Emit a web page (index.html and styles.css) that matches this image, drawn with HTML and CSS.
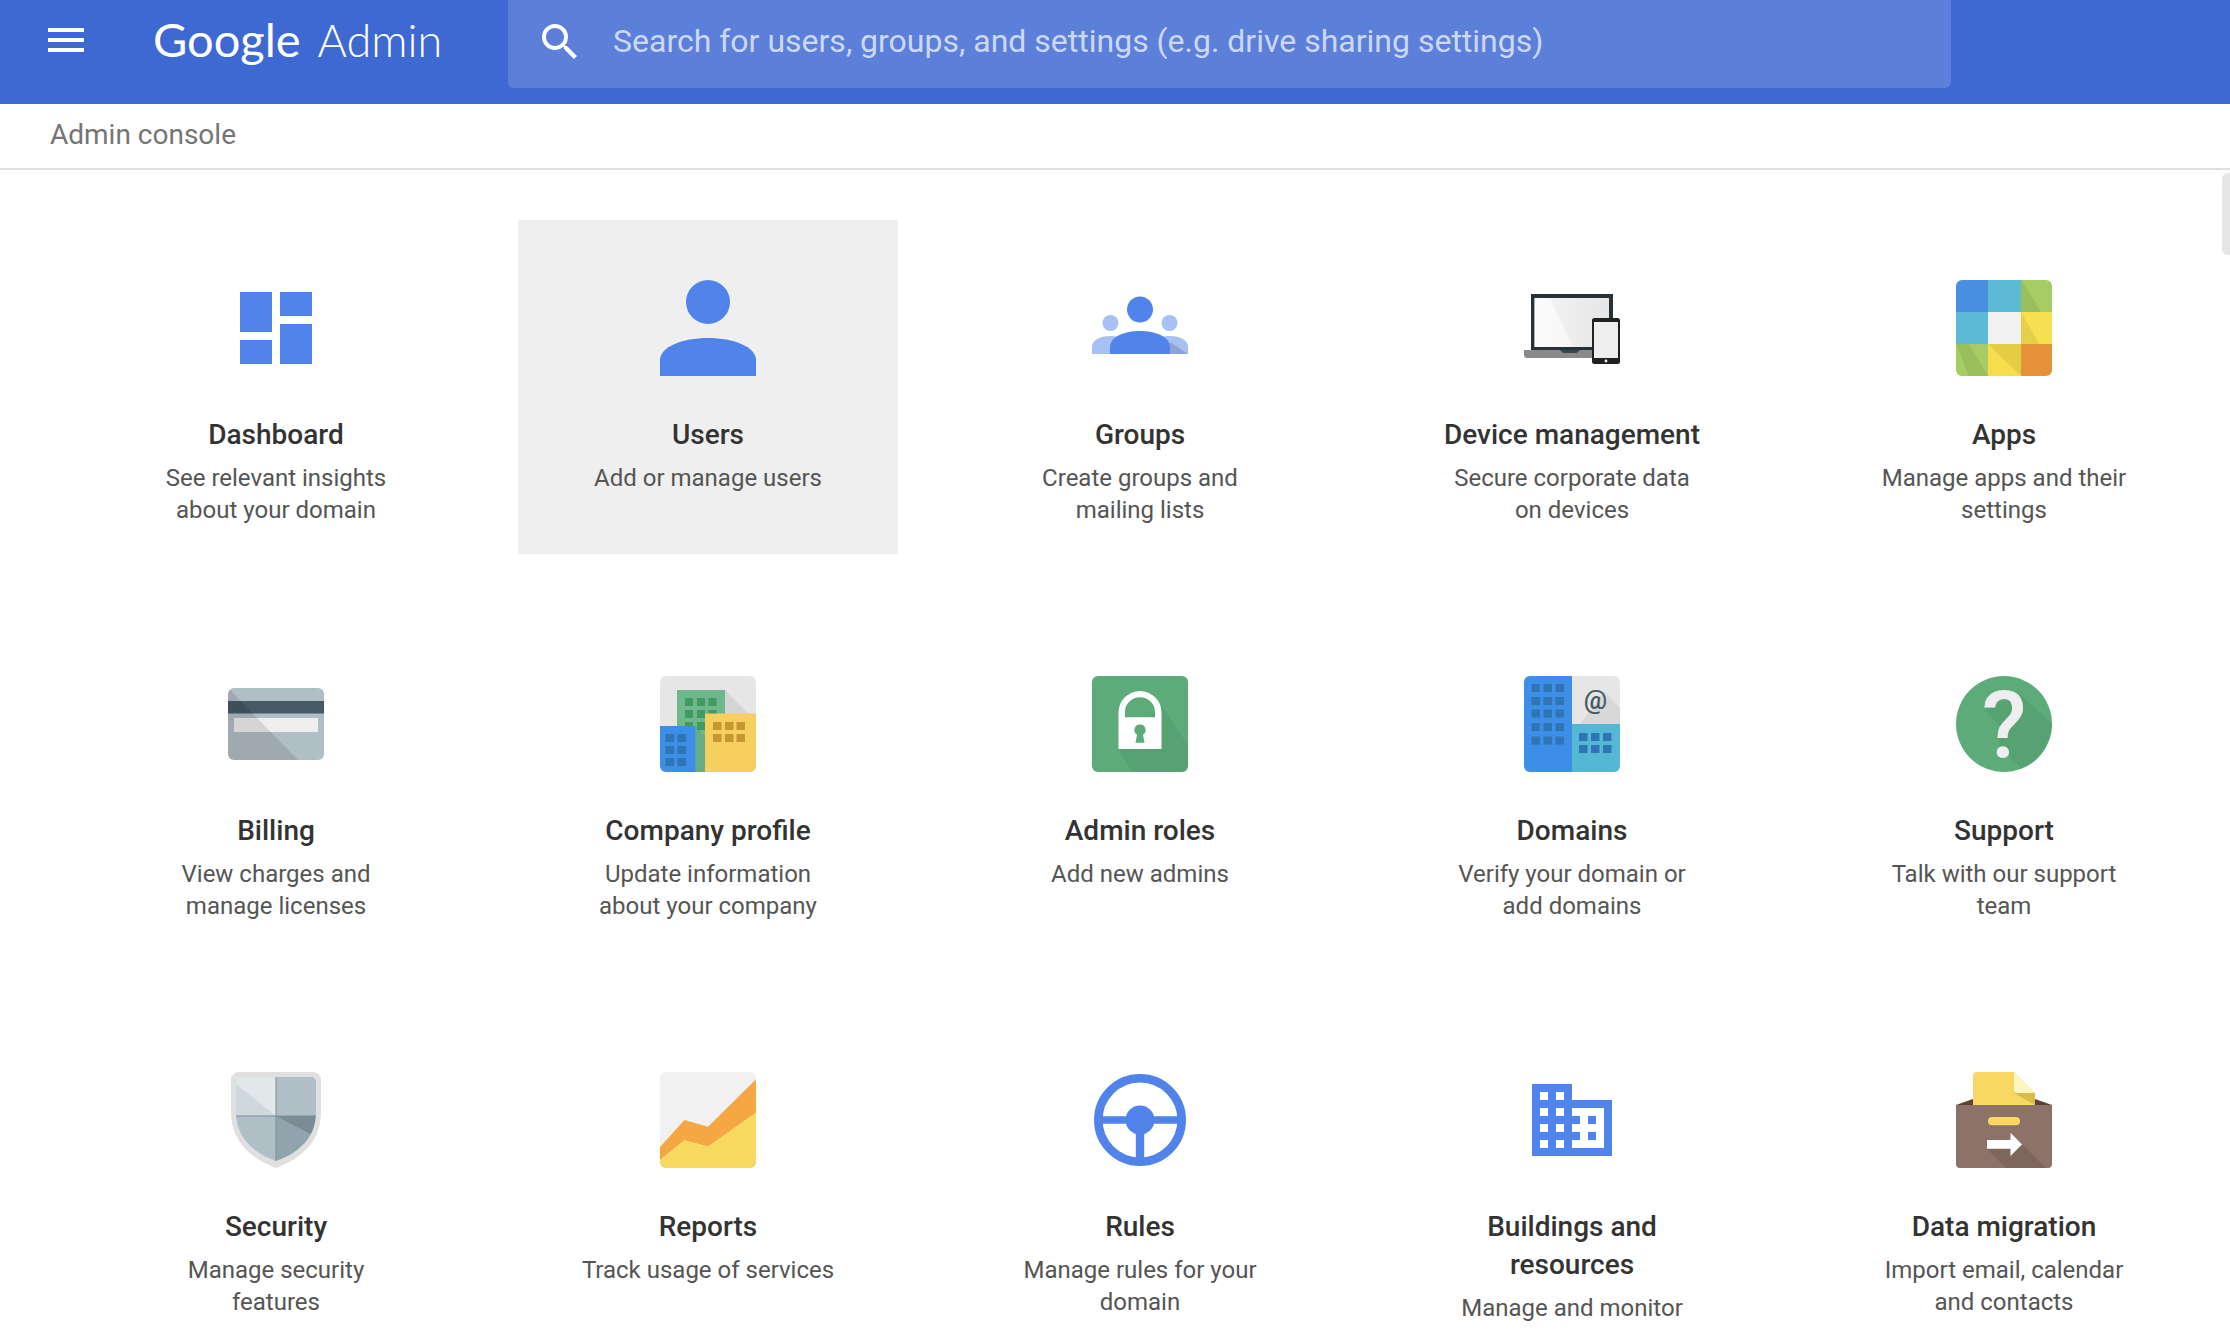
FILE: index.html
```html
<!DOCTYPE html>
<html lang="en">
<head>
<meta charset="utf-8">
<title>Admin console</title>
<link rel="stylesheet" href="styles.css">
</head>
<body>
<header class="topbar">
  <svg class="menu-icon" viewBox="0 0 36 24"><path d="M0 0h36v4H0zM0 10h36v4H0zM0 20h36v4H0z" fill="#fff"/></svg>
  <div class="logo"><span class="logo-google">Google</span><span class="logo-admin">Admin</span></div>
  <div class="search">
    <svg class="search-icon" viewBox="0 0 24 24"><path fill="#fff" d="M15.5 14h-.79l-.28-.27A6.47 6.47 0 0 0 16 9.5 6.5 6.5 0 1 0 9.5 16c1.61 0 3.09-.59 4.23-1.57l.27.28v.79l5 4.99L20.49 19l-4.99-5zm-6 0C7.01 14 5 11.99 5 9.5S7.01 5 9.5 5 14 7.01 14 9.5 11.99 14 9.5 14z"/></svg>
    <span class="search-text">Search for users, groups, and settings (e.g. drive sharing settings)</span>
  </div>
</header>
<div class="crumb">Admin console</div>
<div class="scroll-thumb"></div>
<main class="grid">

  <section class="tile">
    <svg class="icon" viewBox="0 0 24 24"><path fill="#5084eb" d="M3 13h8V3H3v10zm0 8h8v-6H3v6zm10 0h8V11h-8v10zm0-18v6h8V3h-8z"/></svg>
    <h2>Dashboard</h2><p>See relevant insights about your domain</p>
  </section>

  <section class="tile tile-active">
    <svg class="icon" viewBox="0 0 96 96"><circle cx="48" cy="22" r="22" fill="#5084eb"/><path fill="#5084eb" d="M0 96V80C0 67 22 58 48 58s48 9 48 22v16z"/></svg>
    <h2>Users</h2><p>Add or manage users</p>
  </section>

  <section class="tile">
    <svg class="icon" viewBox="0 0 96 96">
      <circle cx="18.5" cy="43" r="8" fill="#a7c1f5"/><circle cx="77.5" cy="43" r="8" fill="#a7c1f5"/>
      <path fill="#a7c1f5" d="M0 74V67c0-7 8-11 18-11 6 0 12 2 15 5h30c3-3 9-5 15-5 10 0 18 4 18 11v7z"/>
      <circle cx="48" cy="29.5" r="13" fill="#5084eb"/>
      <path fill="#5084eb" d="M18 74V67c0-10 14-16 30-16s30 6 30 16v7z"/>
      <path fill="#000" fill-opacity=".15" d="M78 62l18 12H78z"/>
    </svg>
    <h2>Groups</h2><p>Create groups and mailing lists</p>
  </section>

  <section class="tile">
    <svg class="icon" viewBox="0 0 96 96">
      <defs><linearGradient id="screen" x1="0" y1="0" x2="1" y2="0"><stop offset="0" stop-color="#f5f5f5"/><stop offset="1" stop-color="#e6e6e6"/></linearGradient></defs>
      <path fill="#8a8a8a" d="M0 70h74v8H3a3 3 0 0 1-3-3z"/>
      <rect x="7" y="14" width="82" height="56" fill="#263238"/>
      <rect x="10.5" y="18" width="74.5" height="49" fill="url(#screen)"/>
      <path fill="#fff" fill-opacity=".55" d="M10.5 18H26l23 49H10.5z"/>
      <path fill="#37474f" d="M36 70h20l-3 3H39z"/>
      <rect x="68" y="38" width="28" height="46" rx="2.5" fill="#212121"/>
      <rect x="70" y="42" width="24" height="36" fill="#eee"/>
      <circle cx="82" cy="81" r="1.4" fill="#eee"/>
    </svg>
    <h2>Device management</h2><p>Secure corporate data on devices</p>
  </section>

  <section class="tile">
    <svg class="icon" viewBox="0 0 96 96">
      <defs><clipPath id="apps-clip"><rect width="96" height="96" rx="6"/></clipPath></defs>
      <g clip-path="url(#apps-clip)">
        <rect width="32" height="32" fill="#4a90e2"/><rect x="32" width="33" height="32" fill="#5cbad6"/><rect x="65" width="31" height="32" fill="#a5cd63"/>
        <rect y="32" width="32" height="32" fill="#5cbad6"/><rect x="32" y="32" width="33" height="32" fill="#f1f1f1"/><rect x="65" y="32" width="31" height="32" fill="#f7e04f"/>
        <rect y="64" width="32" height="32" fill="#a5cd63"/><rect x="32" y="64" width="33" height="32" fill="#f5dd4b"/><rect x="65" y="64" width="31" height="32" fill="#e59135"/>
        <path fill="#000" fill-opacity=".07" d="M65 0l20 32H65zM65 32l18 32H65zM32 64h33v32zM0 64h13l19 32H13z"/>
      </g>
    </svg>
    <h2>Apps</h2><p>Manage apps and their settings</p>
  </section>

  <section class="tile">
    <svg class="icon" viewBox="0 0 96 96">
      <defs><clipPath id="bill-clip"><rect y="12" width="96" height="72" rx="6"/></clipPath></defs>
      <g clip-path="url(#bill-clip)">
        <rect y="12" width="96" height="72" fill="#b0bec5"/>
        <rect y="25" width="96" height="12.5" fill="#455a64"/>
        <rect x="6" y="42" width="84" height="14" fill="#eee"/>
        <path fill="#000" fill-opacity=".1" d="M0 12l70 72H0z"/>
      </g>
    </svg>
    <h2>Billing</h2><p>View charges and manage licenses</p>
  </section>

  <section class="tile">
    <svg class="icon" viewBox="0 0 96 96">
      <defs><clipPath id="co-clip"><rect width="96" height="96" rx="6"/></clipPath></defs>
      <g clip-path="url(#co-clip)">
        <rect width="96" height="96" fill="#e6e6e6"/>
        <path fill="#000" fill-opacity=".07" d="M65 14l24 24H65z"/>
        <rect x="17" y="14" width="48" height="82" fill="#6fb78d"/>
        <g fill="#439a60">
          <rect x="25" y="22" width="8" height="8"/><rect x="37" y="22" width="8" height="8"/><rect x="48.500" y="22" width="8" height="8"/>
          <rect x="25" y="34" width="8" height="8"/><rect x="37" y="34" width="8" height="8"/><rect x="48.500" y="34" width="8" height="8"/>
          <rect x="25" y="46" width="8" height="8"/><rect x="37" y="46" width="8" height="8"/><rect x="48.500" y="46" width="8" height="8"/>
        </g>
        <rect x="45" y="37.500" width="51" height="58.500" fill="#f7cf5f"/>
        <g fill="#c69630">
          <rect x="53" y="46" width="8.500" height="8"/><rect x="65" y="46" width="8.500" height="8"/><rect x="76.500" y="46" width="8.500" height="8"/>
          <rect x="53" y="58" width="8.500" height="8"/><rect x="65" y="58" width="8.500" height="8"/><rect x="76.500" y="58" width="8.500" height="8"/>
        </g>
        <path fill="#000" fill-opacity=".06" d="M35.500 50L45 60v36h-9.500z"/>
        <rect y="50" width="35.500" height="46" fill="#3d8ee6"/>
        <g fill="#2f75b5">
          <rect x="5.500" y="58" width="8.500" height="8"/><rect x="17.500" y="58" width="8.500" height="8"/>
          <rect x="5.500" y="70" width="8.500" height="8"/><rect x="17.500" y="70" width="8.500" height="8"/>
          <rect x="5.500" y="82" width="8.500" height="8"/><rect x="17.500" y="82" width="8.500" height="8"/>
        </g>
      </g>
    </svg>
    <h2>Company profile</h2><p>Update information about your company</p>
  </section>

  <section class="tile">
    <svg class="icon" viewBox="0 0 96 96">
      <defs><clipPath id="lock-clip"><rect width="96" height="96" rx="6"/></clipPath></defs>
      <g clip-path="url(#lock-clip)">
        <rect width="96" height="96" fill="#5cab79"/>
        <path fill="#000" fill-opacity=".05" d="M69.500 30L96 69v27H40L26.500 73z"/>
      </g>
      <path fill="#fff" fill-rule="evenodd" d="M26.500 73V36.500a21.500 21.500 0 0 1 43 0V73zM33 41.300h30V36a15 14.700 0 0 0-30 0z"/>
      <path fill="#5cab79" d="M48 48.500a5.500 5.500 0 0 1 3 10.200l1.500 8h-9l1.500-8a5.500 5.500 0 0 1 3-10.200z"/>
    </svg>
    <h2>Admin roles</h2><p>Add new admins</p>
  </section>

  <section class="tile">
    <svg class="icon" viewBox="0 0 96 96">
      <defs><clipPath id="dom-clip"><rect width="96" height="96" rx="6"/></clipPath></defs>
      <g clip-path="url(#dom-clip)">
        <rect width="96" height="96" fill="#e6e6e6"/>
        <path fill="#000" fill-opacity=".06" d="M80 16L96 32v16H56z"/>
        <rect x="48" y="48" width="48" height="48" fill="#54b7d3"/>
        <rect width="48" height="96" fill="#3d8ee6"/>
        <g fill="#2f75b5">
          <rect x="7.500" y="8" width="8.500" height="8"/><rect x="19.500" y="8" width="8.500" height="8"/><rect x="31.500" y="8" width="8.500" height="8"/>
          <rect x="7.500" y="21" width="8.500" height="8"/><rect x="19.500" y="21" width="8.500" height="8"/><rect x="31.500" y="21" width="8.500" height="8"/>
          <rect x="7.500" y="33.500" width="8.500" height="8"/><rect x="19.500" y="33.500" width="8.500" height="8"/><rect x="31.500" y="33.500" width="8.500" height="8"/>
          <rect x="7.500" y="47" width="8.500" height="8"/><rect x="19.500" y="47" width="8.500" height="8"/><rect x="31.500" y="47" width="8.500" height="8"/>
          <rect x="7.500" y="60.500" width="8.500" height="8"/><rect x="19.500" y="60.500" width="8.500" height="8"/><rect x="31.500" y="60.500" width="8.500" height="8"/>
          <rect x="55" y="57" width="8.500" height="8"/><rect x="67" y="57" width="8.500" height="8"/><rect x="79" y="57" width="8.500" height="8"/>
          <rect x="55" y="69" width="8.500" height="8"/><rect x="67" y="69" width="8.500" height="8"/><rect x="79" y="69" width="8.500" height="8"/>
        </g>
        <text class="glyph-at" x="71.500" y="33" text-anchor="middle">@</text>
      </g>
    </svg>
    <h2>Domains</h2><p>Verify your domain or add domains</p>
  </section>

  <section class="tile">
    <svg class="icon" viewBox="0 0 96 96">
      <defs><clipPath id="sup-clip"><circle cx="48" cy="48" r="48"/></clipPath></defs>
      <g clip-path="url(#sup-clip)">
        <rect width="96" height="96" fill="#5cab79"/>
        <path fill="#000" fill-opacity=".05" d="M29 34L44 50l-2 9 2 12 26 26h26V48L64 18z"/>
      </g>
      <text class="glyph-q" x="48" y="81" text-anchor="middle">?</text>
    </svg>
    <h2>Support</h2><p>Talk with our support team</p>
  </section>

  <section class="tile">
    <svg class="icon" viewBox="0 0 96 96">
      <defs><clipPath id="sh-clip"><path d="M8 10a5 5 0 0 1 5-5h70a5 5 0 0 1 5 5v30c0 24-15 40-40 49C23 80 8 64 8 40z"/></clipPath></defs>
      <path fill="#e0e0e0" d="M3 8a8 8 0 0 1 8-8h74a8 8 0 0 1 8 8v32c0 28-18 46-45 56C21 86 3 68 3 40z"/>
      <g clip-path="url(#sh-clip)">
        <rect x="8" y="5" width="40" height="39" fill="#cfd8dc"/>
        <path fill="#fff" fill-opacity=".4" d="M8 12V5h40v39z"/>
        <rect x="48" y="5" width="40" height="39" fill="#b0bec5"/>
        <rect x="8" y="44" width="40" height="45" fill="#b0bec5"/>
        <rect x="48" y="44" width="40" height="45" fill="#90a4ae"/>
        <path fill="#000" fill-opacity=".14" d="M48 44h40v21z"/>
        <path fill="#78909c" d="M47.500 5h1v84h-1zM8 43.500h80v1H8z"/>
      </g>
    </svg>
    <h2>Security</h2><p>Manage security features</p>
  </section>

  <section class="tile">
    <svg class="icon" viewBox="0 0 96 96">
      <defs><clipPath id="rep-clip"><rect width="96" height="96" rx="6"/></clipPath></defs>
      <g clip-path="url(#rep-clip)">
        <rect width="96" height="96" fill="#f1f1f1"/>
        <path fill="#f4a742" d="M0 75l24.500-27L48 54.700 96 7.300v33.400L48 74.700l-23.500-6.400L0 88z"/>
        <path fill="#f7d95f" d="M0 88l24.500-19.700L48 74.700l48-34V96H0z"/>
      </g>
    </svg>
    <h2>Reports</h2><p>Track usage of services</p>
  </section>

  <section class="tile">
    <svg class="icon" viewBox="0 0 96 96">
      <circle cx="48" cy="48" r="41.700" fill="none" stroke="#5084eb" stroke-width="8.600"/>
      <circle cx="48" cy="48" r="14.500" fill="#5084eb"/>
      <path fill="#5084eb" d="M6 44.200h84v7.600H6zM43.800 48h8.400v44h-8.400z"/>
    </svg>
    <h2>Rules</h2><p>Manage rules for your domain</p>
  </section>

  <section class="tile">
    <svg class="icon" viewBox="0 0 24 24"><path fill="#5084eb" d="M12 7V3H2v18h20V7H12zM6 19H4v-2h2v2zm0-4H4v-2h2v2zm0-4H4V9h2v2zm0-4H4V5h2v2zm4 12H8v-2h2v2zm0-4H8v-2h2v2zm0-4H8V9h2v2zm0-4H8V5h2v2zm10 12h-8v-2h2v-2h-2v-2h2v-2h-2V9h8v10zm-2-8h-2v2h2v-2zm0 4h-2v2h2v-2z"/></svg>
    <h2>Buildings and resources</h2><p>Manage and monitor buildings, rooms and resources</p>
  </section>

  <section class="tile">
    <svg class="icon" viewBox="0 0 96 96">
      <defs><clipPath id="box-clip"><path d="M0 33h96v59a4 4 0 0 1-4 4H4a4 4 0 0 1-4-4z"/></clipPath></defs>
      <path fill="#5d4037" d="M0 33l17-6h62l17 6z"/>
      <path fill="#f8d862" d="M17 4a4 4 0 0 1 4-4h37l21 21v12H17z"/>
      <path fill="#d9bc4a" d="M58 21h21v12z"/>
      <path fill="#fdf5c0" d="M58 0l21 21H62a4 4 0 0 1-4-4z"/>
      <g clip-path="url(#box-clip)">
        <rect y="33" width="96" height="63" fill="#8d7268"/>
        <path fill="#000" fill-opacity=".1" d="M31 77l24-1 11-4 24 24H50z"/>
      </g>
      <rect x="32" y="45" width="32" height="8.300" rx="4.100" fill="#f8d862"/>
      <path fill="#fff" d="M31 68h23.500v-7.300L66 72.500 54.500 84v-7.300H31z"/>
    </svg>
    <h2>Data migration</h2><p>Import email, calendar and contacts</p>
  </section>
</main>
</body>
</html>
```
FILE: styles.css
```css
* { box-sizing: border-box; }
html, body { margin: 0; height: 1330px; overflow: hidden; background: #fff; }
body { font-family: Roboto, "Liberation Sans", sans-serif; color: #333; position: relative; }

.topbar { height: 104px; background: #3f69d2; display: flex; align-items: flex-start; padding-left: 48px; }
.menu-icon { width: 36px; height: 24px; margin-top: 28px; flex: none; }
.logo { width: 424px; padding-left: 69px; margin-top: 7px; flex: none; color: #fff; font-family: Lato, sans-serif; font-size: 47px; line-height: 64px; white-space: nowrap; }
.logo-google { font-weight: 400; }
.logo-admin { font-weight: 300; font-size: 45px; margin-left: 17px; }
.search { width: 1443px; height: 88px; background: #5c80da; border-radius: 0 0 6px 6px; display: flex; align-items: center; padding-left: 28px; flex: none; }
.search-icon { width: 48px; height: 48px; flex: none; margin-top: -4px; }
.search-text { margin-left: 29px; font-size: 32px; color: rgba(255,255,255,.7); margin-top: -6px; white-space: nowrap; }

.crumb { height: 66px; border-bottom: 2px solid #e0e0e0; padding-left: 50px; font-size: 28px; line-height: 62px; color: #757575; }
.scroll-thumb { position: absolute; right: 0; top: 173px; width: 8px; height: 82px; background: #e6e6e6; border-radius: 6px 0 0 6px; }

.grid { display: grid; grid-template-columns: repeat(5, 380px); grid-auto-rows: 334px; column-gap: 52px; row-gap: 62px; padding: 50px 0 0 86px; }
.tile { padding: 60px 58px 0; text-align: center; }
.tile-active { background: #efefef; }
.icon { display: block; width: 96px; height: 96px; margin: 0 auto 40px; overflow: visible; }
.tile h2 { margin: 0 -10px 8px; font-size: 28px; line-height: 38px; font-weight: 500; color: #333; }
.tile p { margin: 0; font-size: 24px; line-height: 32px; color: #555; }
.glyph-at { font-family: Roboto, sans-serif; font-size: 26px; font-weight: 500; fill: #455a64; }
.glyph-q { font-family: Roboto, sans-serif; font-size: 92px; font-weight: 500; fill: #eee; }
```
